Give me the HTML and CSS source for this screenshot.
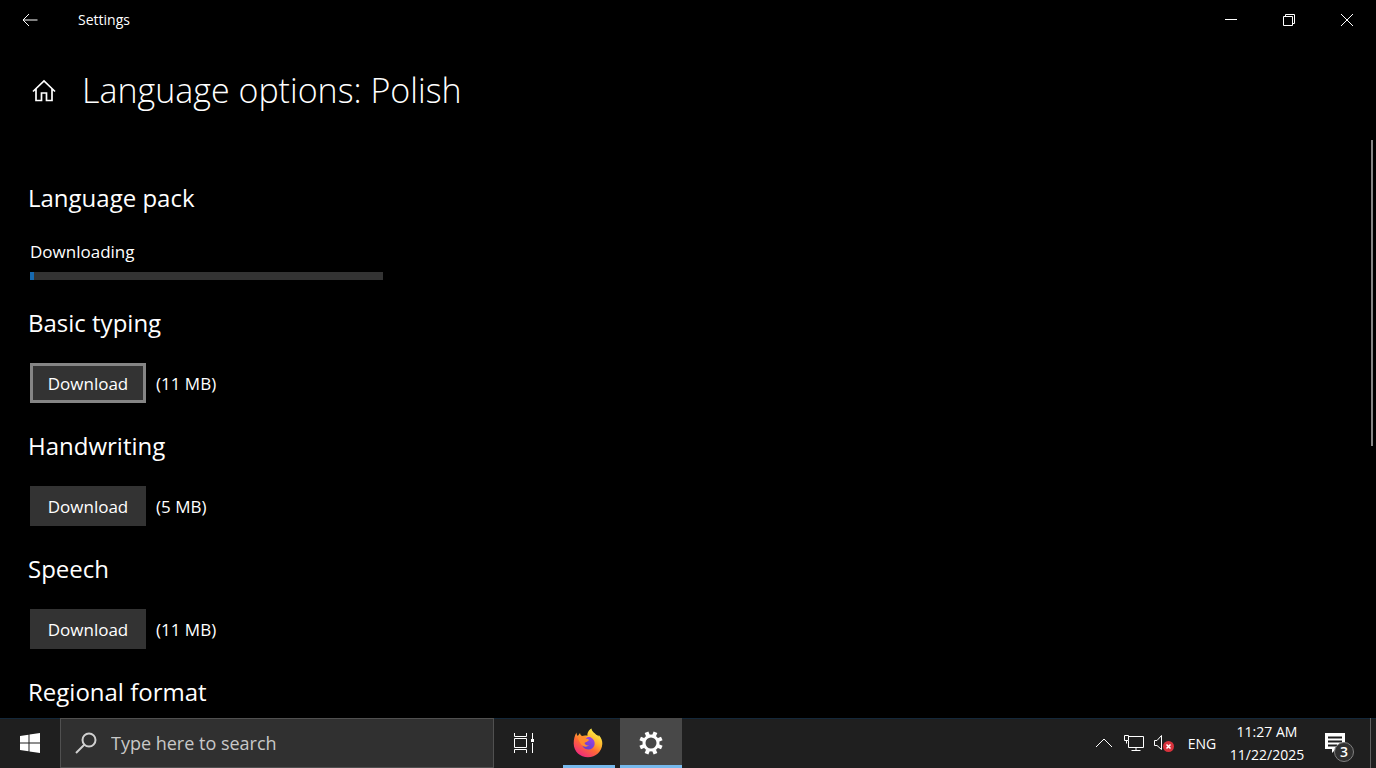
FILE: index.html
```html
<!DOCTYPE html>
<html lang="en">

<head>
    <meta charset="UTF-8">
    <meta name="viewport" content="width=device-width, initial-scale=1.0">
    <title>Settings</title>
    <link rel="stylesheet" href="styles.css">
</head>

<body>
    <div class="window">
        <header class="titlebar">
            <button class="back" aria-label="Back">
                <svg width="16" height="14" viewBox="0 0 16 14"><path d="M15.500 7H1M7 1L1 7l6 6" /></svg>
            </button>
            <span class="app_name">Settings</span>
            <div class="controls">
                <button aria-label="Minimize">
                    <svg width="14" height="14" viewBox="0 0 14 14"><path d="M1 6.500h12" /></svg>
                </button>
                <button aria-label="Restore">
                    <svg width="14" height="14" viewBox="0 0 14 14"><path d="M1.500 3.500h9v9h-9zM3.500 3.500v-2h9v9h-2" /></svg>
                </button>
                <button aria-label="Close">
                    <svg width="14" height="14" viewBox="0 0 14 14"><path d="M1 1l12 12M13 1L1 13" /></svg>
                </button>
            </div>
        </header>

        <div class="heading">
            <a href="#" class="home" aria-label="Home">
                <svg width="24" height="24" viewBox="0 0 24 24"><path d="M1 13.500L12 3l11 10.500M4 11v11.500h5.500V15h5v7.500H20V11" /></svg>
            </a>
            <h1>Language options: Polish</h1>
        </div>

        <main class="content">
            <section>
                <h2>Language pack</h2>
                <div class="download">
                    <label for="pack">Downloading</label>
                    <progress id="pack" max="100" value="1"></progress>
                </div>
            </section>
            <section>
                <h2>Basic typing</h2>
                <div class="row">
                    <button class="btn active">Download</button>
                    <span>(11 MB)</span>
                </div>
            </section>
            <section>
                <h2>Handwriting</h2>
                <div class="row">
                    <button class="btn">Download</button>
                    <span>(5 MB)</span>
                </div>
            </section>
            <section>
                <h2>Speech</h2>
                <div class="row">
                    <button class="btn">Download</button>
                    <span>(11 MB)</span>
                </div>
            </section>
            <section>
                <h2>Regional format</h2>
            </section>
        </main>
        <div class="scroll_thumb"></div>
    </div>

    <footer class="taskbar">
        <button class="start" aria-label="Start">
            <svg width="22" height="22" viewBox="0 0 22 22"><path d="M1 4l8.500-1.300v7.800H1zM10.500 2.500L21 1v9.500H10.500zM1 11.500h8.500v7.800L1 18zM10.500 11.500H21V21l-10.500-1.500z" /></svg>
        </button>
        <div class="search">
            <svg width="22" height="22" viewBox="0 0 22 22"><circle cx="14" cy="8" r="6.500" /><path d="M9.500 12.500L1 21" /></svg>
            <input type="text" aria-label="Search" placeholder="Type here to search">
        </div>
        <button class="task_view" aria-label="Task view">
            <svg width="24" height="22" viewBox="0 0 24 22">
                <path d="M2.500 1v3.500h12V1M2.500 21v-3.500h12V21M2.500 6.500h12v9h-12zM20.500 1v6M20.500 11v10" />
                <path class="solid" d="M19 7h3v3h-3z" />
            </svg>
        </button>
        <button class="app running" aria-label="Firefox">
            <svg width="30" height="30" viewBox="0 0 30 30">
                <defs>
                    <linearGradient id="fox" x1="0.800" y1="0.100" x2="0.250" y2="0.950">
                        <stop offset="0" stop-color="#fff044" />
                        <stop offset="0.350" stop-color="#ffb02e" />
                        <stop offset="0.600" stop-color="#ff6a35" />
                        <stop offset="1" stop-color="#f02a7c" />
                    </linearGradient>
                    <linearGradient id="globe" x1="0.800" y1="0" x2="0.200" y2="1">
                        <stop offset="0" stop-color="#a044e0" />
                        <stop offset="1" stop-color="#5a3fd0" />
                    </linearGradient>
                </defs>
                <path fill="url(#fox)" d="M3.500 4.500C3.500 6 4 7 4.800 8L7 5c.2 1.500 1 2.500 2 3 2-.8 4-.7 5.500-.2C14 4.500 16 1.800 18.500.500c.2 3 3 4.200 4.700 6.300 1 .2 1.600.8 2.100 1.700l.5-1.500C28.500 10 29.500 13 29.300 16c-.4 7.500-6.500 13.300-14.300 13.300S.800 23.500.700 15.500C.700 11.500 1.500 7.500 3.500 4.500z" />
                <path fill="url(#globe)" d="M8.500 14c1.500-.5 3-.2 4.500-.5 1-.3 1.800-1.300 3-1.500-1-1-2-1.500-3.500-1.300 1-1.500 3.500-2.200 5.500-1.200 3 1.500 4.200 4.500 3.500 7.500-.7 2.700-3 4.500-6 4.500-4 0-6.800-3-7-7.500z" />
                <path fill="#ff8a2e" d="M5 9.500C8 7.500 12 7.800 14 8.500c-1 1-1.800 1.800-1.500 2.700 1.300.2 2.800.1 3.500.8-1 1.800-3.200 1.700-4.500 3 .5 2 2.500 2.700 4.500 2.300-2 2.200-6.500 1.700-8.300-1.500C6.500 13.500 5 12 5 9.500z" />
            </svg>
        </button>
        <button class="app running current" aria-label="Settings">
            <svg width="24" height="24" viewBox="0 0 24 24">
                <circle cx="12" cy="12" r="7" />
                <path d="M15 4.800l1.500-3.600M19.200 9l3.600-1.500M19.200 15l3.600 1.500M15 19.200l1.500 3.600M9 19.200l-1.500 3.600M4.800 15l-3.600 1.500M4.800 9L1.200 7.500M9 4.800L7.500 1.200" />
            </svg>
        </button>

        <div class="tray">
            <button aria-label="Show hidden icons">
                <svg width="18" height="18" viewBox="0 0 18 18"><path d="M1 13l8-8 8 8" /></svg>
            </button>
            <button aria-label="Network">
                <svg width="22" height="18" viewBox="0 0 22 18"><path d="M6 2.500h14.500v11H5.500V7M1.500 1.500h4v5h-4zM3.500 6.500v3M13 13.500v3M8.500 16.500h9" /></svg>
            </button>
            <button aria-label="Volume muted">
                <svg width="22" height="20" viewBox="0 0 22 20">
                    <path d="M1.500 7.500H4l4.500-5v14L4 12.500H1.500z" />
                    <circle class="mute" cx="15.500" cy="13.500" r="5.500" />
                    <path class="cross" d="M13.500 11.500l4 4M17.500 11.500l-4 4" />
                </svg>
            </button>
            <button class="lang">ENG</button>
            <button class="clock"><span>11:27 AM</span><span>11/22/2025</span></button>
            <button class="notify" aria-label="Notifications">
                <svg width="22" height="22" viewBox="0 0 22 22"><path class="solid" d="M1 1h20v16h-9l-4 4v-4H1z" /><path class="lines" d="M4 5.500h14M4 9.500h14M4 13.500h9" /></svg>
                <span class="badge">3</span>
            </button>
            <button class="desktop" aria-label="Show desktop"></button>
        </div>
    </footer>
</body>

</html>
```
FILE: styles.css
```css
html,
body {
    margin: 0;
    padding: 0;
}

:root {
    --button-color: #333333;
    --taskbar-color: #1f1f1f;
    --accent-color: #76b9ed;
}

body {
    display: flex;
    flex-direction: column;
    height: 100vh;
    overflow: hidden;
    background: #000000;
    color: #ffffff;
    font-family: "Open Sans", "Noto Sans", sans-serif;
    font-size: 17px;
}

button,
input {
    font-family: inherit;
    font-size: inherit;
    color: inherit;
    background: none;
    border: none;
    padding: 0;
    margin: 0;
}

button {
    display: flex;
    align-items: center;
    justify-content: center;
}

svg {
    display: block;
    fill: none;
    stroke: #ffffff;
}

.window {
    flex: 1;
    min-height: 0;
    overflow: hidden;
    position: relative;
}

.titlebar {
    display: flex;
    height: 40px;
    align-items: stretch;
}

.titlebar .back {
    width: 60px;
}

.app_name {
    flex: 1;
    padding-left: 18px;
    font-size: 14px;
    line-height: 40px;
}

.controls {
    display: flex;
}

.controls button {
    width: 58px;
}

.heading {
    display: flex;
    align-items: center;
    height: 100px;
    padding-left: 32px;
}

.home svg {
    stroke-width: 1.7;
}

.heading h1 {
    margin: 0 0 0 26px;
    font-size: 34px;
    font-weight: 300;
}

.content {
    display: flex;
    flex-direction: column;
    gap: 27px;
    padding: 42px 28px 0;
}

.content h2 {
    margin: 0 0 24px;
    font-size: 24px;
    font-weight: 400;
    line-height: 32px;
}

.download {
    display: flex;
    flex-direction: column;
    gap: 6px;
    padding-left: 2px;
    line-height: 28px;
}

progress {
    appearance: none;
    display: block;
    width: 353px;
    height: 8px;
    border: none;
    background: var(--button-color);
}

progress::-webkit-progress-bar {
    background: var(--button-color);
}

progress::-webkit-progress-value {
    background: #1669b0;
}

.row {
    display: flex;
    align-items: center;
    gap: 10px;
    padding-left: 2px;
}

.btn {
    width: 116px;
    height: 40px;
    background: var(--button-color);
}

.btn.active {
    border: 3px solid #858585;
}

.scroll_thumb {
    position: absolute;
    top: 140px;
    right: 3px;
    width: 2px;
    height: 306px;
    background: #858585;
}

.taskbar {
    display: flex;
    height: 50px;
    background: var(--taskbar-color);
    box-shadow: inset 0 1px #14283a;
}

.start {
    width: 60px;
}

.start svg {
    fill: #ffffff;
    stroke: none;
}

.search {
    display: flex;
    align-items: center;
    box-sizing: border-box;
    width: 434px;
    padding: 0 14px;
    gap: 14px;
    background: #303030;
    border: 1px solid #505050;
}

.search svg {
    stroke: #d0d0d0;
    stroke-width: 2;
}

.search input {
    flex: 1;
    font-size: 18px;
}

.search input::placeholder {
    color: #c8c8c8;
}

.task_view {
    width: 60px;
    margin-right: 3px;
}

.solid {
    fill: #ffffff;
    stroke: none;
}

.app {
    position: relative;
    width: 62px;
    margin-right: 1px;
}

.app.running::after {
    content: "";
    position: absolute;
    left: 6px;
    right: 4px;
    bottom: 0;
    height: 3px;
    background: var(--accent-color);
}

.app.current {
    background: #484848;
}

.app.current::after {
    left: 0;
    right: 0;
}

.app[aria-label="Firefox"] svg {
    stroke: none;
}

.app.current svg {
    stroke-width: 3;
}

.app.current path {
    stroke-width: 4;
}

.tray {
    display: flex;
    margin-left: auto;
    font-size: 14px;
}

.tray button {
    width: 30px;
}

.tray .mute {
    fill: #d8323c;
    stroke: none;
}

.tray .cross {
    stroke-width: 1.5;
}

.tray .lang {
    width: 46px;
}

.tray .clock {
    flex-direction: column;
    width: 84px;
    line-height: 23px;
}

.tray .notify {
    position: relative;
    width: 52px;
}

.notify .lines {
    stroke: var(--taskbar-color);
    stroke-width: 2;
}

.notify .badge {
    position: absolute;
    right: 7px;
    bottom: 6px;
    width: 18px;
    height: 18px;
    border: 1px solid #808080;
    border-radius: 50%;
    background: #303030;
    font-weight: 600;
    line-height: 18px;
}

.tray .desktop {
    width: 6px;
    margin-left: 9px;
    border-left: 1px solid #606060;
}
```
